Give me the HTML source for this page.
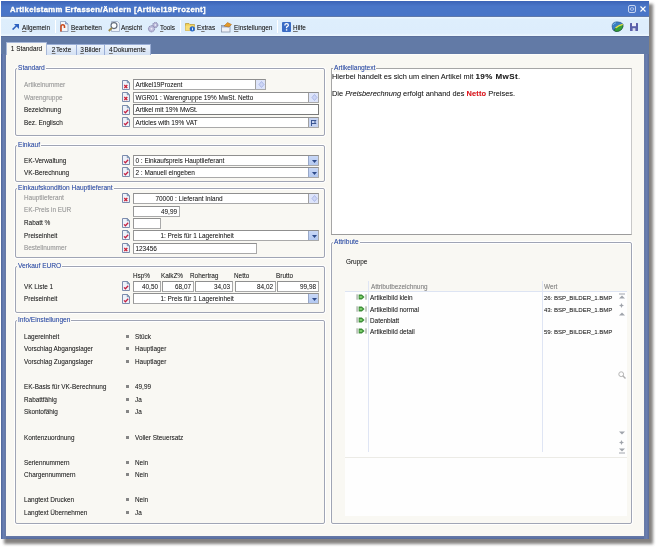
<!DOCTYPE html><html><head><meta charset="utf-8"><style>
*{margin:0;padding:0;box-sizing:border-box}
html,body{width:658px;height:548px;overflow:hidden;background:#fff;font-family:"Liberation Sans",sans-serif;font-size:6.4px;color:#262626;text-shadow:0.12px 0 0 rgba(40,40,40,.3)}
#root{position:absolute;left:0;top:0;width:658px;height:548px;filter:blur(0.4px)}
div,svg{position:absolute;white-space:nowrap}
span{position:static}
.grp{border:1px solid #a0a5b5;border-radius:2px;box-shadow:0 0 0 1px rgba(255,255,255,.9),inset 0 1px 0 #fff}
.lg{color:#3553a8;text-shadow:0.1px 0 0 rgba(53,83,168,.4);font-size:6.6px;background:#f9f8f3;padding:0 1px 0 1px;line-height:8px;height:8px}
.lbl{line-height:8px;height:8px}
.dis{color:#a0a0a0;text-shadow:0.12px 0 0 rgba(150,150,150,.5)}
.inp{height:11px;background:#fff;border:1px solid #a9a9a9;border-top-color:#8f8f8f;border-left-color:#979797;line-height:9px;padding-left:1.5px;overflow:hidden}
.r{text-align:right;padding-right:2px;padding-left:0}
.btn{top:0;right:0;width:10px;height:9px;background:#dde4fa;border-left:1px solid #a0a0a0}
.dd{background:linear-gradient(#c9d8f7,#b3c8f0);border-left:1px solid #98a8c8}
.ico{width:8px;height:10px}
.tab{height:11px;border:1px solid #9aaed6;border-bottom:none;border-radius:1px 1px 0 0;line-height:10px;background:linear-gradient(#eef4fc,#d3e0f3);color:#1a1a1a;text-align:center}
.tbt{line-height:8px;height:8px;top:24px;color:#1a1a1a}
.sep{top:20px;width:1px;height:13px;background:#b7c3d6;border-right:1px solid #fff}
u{text-decoration-color:#777}
</style></head><body><div id="root">
<div style="left:4px;top:4px;width:649px;height:540px;background:#6e6c6a;filter:blur(1.5px);opacity:.85"></div>
<div style="left:1px;top:1px;width:648px;height:538px;background:#5e75a8"></div>
<div style="left:1px;top:54px;width:5px;height:485px;background:linear-gradient(to right,#4d6496,#6a80b4 45%,#647aaa 75%,#6b7ba2)"></div>
<div style="left:644px;top:54px;width:5px;height:485px;background:linear-gradient(to left,#5a6c98,#6a7eb0 45%,#647aaa 75%,#6b7ba2)"></div>
<div style="left:6px;top:536px;width:638px;height:3px;background:linear-gradient(#6878a4,#5e74a6 50%,#566a9a)"></div>
<div style="left:1px;top:1px;width:648px;height:15px;background:linear-gradient(#3c63b6,#4a76c8 35%,#4a75c7)"></div>
<div style="left:10px;top:4px;color:#fff;font-weight:bold;font-size:7.7px;line-height:11px;height:11px;-webkit-text-stroke:0.35px #fff;letter-spacing:0.33px">Artikelstamm Erfassen/Ändern [Artikel19Prozent]</div>
<svg style="left:628px;top:5px" width="8" height="8" viewBox="0 0 8 8"><rect x=".5" y=".5" width="7" height="7" rx="1.5" fill="none" stroke="#c6d3f0" stroke-width="1"/><rect x="2.3" y="2.8" width="3.4" height="2.4" rx="1" fill="none" stroke="#c6d3f0" stroke-width=".9"/></svg>
<svg style="left:640px;top:6px" width="6" height="6" viewBox="0 0 6 6"><path d="M.5 .5L5.5 5.5M5.5 .5L.5 5.5" stroke="#fff" stroke-width="1.1"/></svg>
<div style="left:1px;top:16px;width:648px;height:21px;background:linear-gradient(#eef7ff,#deeefc 15%,#ddedfc 85%,#eef8ff);border-top:1px solid #6079aa;border-bottom:1px solid #5b6f9b"></div>
<div style="left:1px;top:37px;width:648px;height:17px;background:#627aa6"></div>
<div style="left:6px;top:54px;width:638px;height:482px;background:#f9f8f3;border-top:1px solid #fdfdfb"></div>
<div class="tab" style="left:46px;top:44px;width:31px"><u>2</u>&#8202;Texte</div>
<div class="tab" style="left:76px;top:44px;width:29px"><u>3</u>&#8202;Bilder</div>
<div class="tab" style="left:104px;top:44px;width:47px"><u>4</u>&#8202;Dokumente</div>
<div class="tab" style="left:6px;top:42px;width:41px;height:13px;background:#f9f8f3;border-color:#a8b8d8;line-height:12px">1 Standard</div>
<div class="grp" style="left:15px;top:68px;width:310px;height:68px"></div>
<div class="lg" style="left:17px;top:64px">Standard</div>
<div class="lbl dis" style="left:24px;top:81px;">Artikelnummer</div>
<svg class="ico" style="left:122px;top:80px" width="8" height="10" viewBox="0 0 8 10"><path d="M.5 .5H5.2L7.5 2.8V9.5H.5Z" fill="#eef2fa" stroke="#7d8cad"/><path d="M5.2 .5V2.8H7.5Z" fill="#9fb4d4" stroke="#5f7898" stroke-width=".6"/><path d="M2.3 5L5.3 8.1M5.3 5L2.3 8.1" stroke="#cc2035" stroke-width="1.35"/></svg>
<div class="inp " style="left:133px;top:79px;width:133px;">Artikel19Prozent<div class="btn"><svg style="left:1.5px;top:1px" width="7" height="7"><path d="M3.5 .5L6 3.5L3.5 6.5L1 3.5Z" fill="#cdd6f4" stroke="#a9b6e6" stroke-width=".9"/></svg></div></div>
<div class="lbl dis" style="left:24px;top:94px;">Warengruppe</div>
<svg class="ico" style="left:122px;top:92px" width="8" height="10" viewBox="0 0 8 10"><path d="M.5 .5H5.2L7.5 2.8V9.5H.5Z" fill="#eef2fa" stroke="#7d8cad"/><path d="M5.2 .5V2.8H7.5Z" fill="#9fb4d4" stroke="#5f7898" stroke-width=".6"/><path d="M2.3 5L5.3 8.1M5.3 5L2.3 8.1" stroke="#cc2035" stroke-width="1.35"/></svg>
<div class="inp " style="left:133px;top:92px;width:186px;">WGR01 : Warengruppe 19% MwSt. Netto<div class="btn"><svg style="left:1.5px;top:1px" width="7" height="7"><path d="M3.5 .5L6 3.5L3.5 6.5L1 3.5Z" fill="#cdd6f4" stroke="#a9b6e6" stroke-width=".9"/></svg></div></div>
<div class="lbl" style="left:24px;top:106px;">Bezeichnung</div>
<svg class="ico" style="left:122px;top:105px" width="8" height="10" viewBox="0 0 8 10"><path d="M.5 .5H5.2L7.5 2.8V9.5H.5Z" fill="#eef2fa" stroke="#7d8cad"/><path d="M5.2 .5V2.8H7.5Z" fill="#9fb4d4" stroke="#5f7898" stroke-width=".6"/><path d="M2 6.4L3.4 7.8L6.2 4.8" fill="none" stroke="#c42040" stroke-width="1.25"/></svg>
<div class="inp " style="left:133px;top:104px;width:186px;border-color:#7a7a7a;height:11px;line-height:10px">Artikel mit 19% MwSt.</div>
<div class="lbl" style="left:24px;top:119px;">Bez. Englisch</div>
<svg class="ico" style="left:122px;top:117px" width="8" height="10" viewBox="0 0 8 10"><path d="M.5 .5H5.2L7.5 2.8V9.5H.5Z" fill="#eef2fa" stroke="#7d8cad"/><path d="M5.2 .5V2.8H7.5Z" fill="#9fb4d4" stroke="#5f7898" stroke-width=".6"/><path d="M2 6.4L3.4 7.8L6.2 4.8" fill="none" stroke="#c42040" stroke-width="1.25"/></svg>
<div class="inp " style="left:133px;top:117px;width:186px;">Articles with 19% VAT<div class="btn" style="background:#c7d4f2"><svg style="left:2px;top:1.5px" width="6" height="6"><path d="M.5 0V6M.5 .5H5L3.5 2L5 3.5H.5" fill="none" stroke="#2d4a8a" stroke-width=".9"/></svg></div></div>
<div class="grp" style="left:15px;top:145px;width:310px;height:37px"></div>
<div class="lg" style="left:17px;top:141px">Einkauf</div>
<div class="lbl" style="left:24px;top:157px;">EK-Verwaltung</div>
<svg class="ico" style="left:122px;top:155px" width="8" height="10" viewBox="0 0 8 10"><path d="M.5 .5H5.2L7.5 2.8V9.5H.5Z" fill="#eef2fa" stroke="#7d8cad"/><path d="M5.2 .5V2.8H7.5Z" fill="#9fb4d4" stroke="#5f7898" stroke-width=".6"/><path d="M2 6.4L3.4 7.8L6.2 4.8" fill="none" stroke="#c42040" stroke-width="1.25"/></svg>
<div class="inp " style="left:133px;top:155px;width:186px;">0 : Einkaufspreis Hauptlieferant<div class="btn dd"><svg style="left:2.5px;top:3.5px" width="5" height="3"><path d="M0 0H5L2.5 3Z" fill="#2d4a8a"/></svg></div></div>
<div class="lbl" style="left:24px;top:169px;">VK-Berechnung</div>
<svg class="ico" style="left:122px;top:167px" width="8" height="10" viewBox="0 0 8 10"><path d="M.5 .5H5.2L7.5 2.8V9.5H.5Z" fill="#eef2fa" stroke="#7d8cad"/><path d="M5.2 .5V2.8H7.5Z" fill="#9fb4d4" stroke="#5f7898" stroke-width=".6"/><path d="M2 6.4L3.4 7.8L6.2 4.8" fill="none" stroke="#c42040" stroke-width="1.25"/></svg>
<div class="inp " style="left:133px;top:167px;width:186px;">2 : Manuell eingeben<div class="btn dd"><svg style="left:2.5px;top:3.5px" width="5" height="3"><path d="M0 0H5L2.5 3Z" fill="#2d4a8a"/></svg></div></div>
<div class="grp" style="left:15px;top:188px;width:310px;height:70px"></div>
<div class="lg" style="left:17px;top:184px">Einkaufskondition Hauptlieferant</div>
<div class="lbl dis" style="left:24px;top:194px;">Hauptlieferant</div>
<svg class="ico" style="left:122px;top:193px" width="8" height="10" viewBox="0 0 8 10"><path d="M.5 .5H5.2L7.5 2.8V9.5H.5Z" fill="#eef2fa" stroke="#7d8cad"/><path d="M5.2 .5V2.8H7.5Z" fill="#9fb4d4" stroke="#5f7898" stroke-width=".6"/><path d="M2.3 5L5.3 8.1M5.3 5L2.3 8.1" stroke="#cc2035" stroke-width="1.35"/></svg>
<div class="inp " style="left:133px;top:193px;width:186px;"><span style="padding-left:20px">70000 : Lieferant Inland</span><div class="btn"><svg style="left:1.5px;top:1px" width="7" height="7"><path d="M3.5 .5L6 3.5L3.5 6.5L1 3.5Z" fill="#cdd6f4" stroke="#a9b6e6" stroke-width=".9"/></svg></div></div>
<div class="lbl dis" style="left:24px;top:206px;">EK-Preis in EUR</div>
<div class="inp r" style="left:133px;top:206px;width:47px;">49,99</div>
<div class="lbl" style="left:24px;top:219px;">Rabatt %</div>
<svg class="ico" style="left:122px;top:218px" width="8" height="10" viewBox="0 0 8 10"><path d="M.5 .5H5.2L7.5 2.8V9.5H.5Z" fill="#eef2fa" stroke="#7d8cad"/><path d="M5.2 .5V2.8H7.5Z" fill="#9fb4d4" stroke="#5f7898" stroke-width=".6"/><path d="M2 6.4L3.4 7.8L6.2 4.8" fill="none" stroke="#c42040" stroke-width="1.25"/></svg>
<div class="inp " style="left:133px;top:218px;width:28px;"></div>
<div class="lbl" style="left:24px;top:232px;">Preiseinheit</div>
<svg class="ico" style="left:122px;top:230px" width="8" height="10" viewBox="0 0 8 10"><path d="M.5 .5H5.2L7.5 2.8V9.5H.5Z" fill="#eef2fa" stroke="#7d8cad"/><path d="M5.2 .5V2.8H7.5Z" fill="#9fb4d4" stroke="#5f7898" stroke-width=".6"/><path d="M2 6.4L3.4 7.8L6.2 4.8" fill="none" stroke="#c42040" stroke-width="1.25"/></svg>
<div class="inp " style="left:133px;top:230px;width:186px;"><span style="padding-left:25px">1: Preis für 1 Lagereinheit</span><div class="btn dd"><svg style="left:2.5px;top:3.5px" width="5" height="3"><path d="M0 0H5L2.5 3Z" fill="#2d4a8a"/></svg></div></div>
<div class="lbl dis" style="left:24px;top:244px;">Bestellnummer</div>
<svg class="ico" style="left:122px;top:243px" width="8" height="10" viewBox="0 0 8 10"><path d="M.5 .5H5.2L7.5 2.8V9.5H.5Z" fill="#eef2fa" stroke="#7d8cad"/><path d="M5.2 .5V2.8H7.5Z" fill="#9fb4d4" stroke="#5f7898" stroke-width=".6"/><path d="M2.3 5L5.3 8.1M5.3 5L2.3 8.1" stroke="#cc2035" stroke-width="1.35"/></svg>
<div class="inp " style="left:133px;top:243px;width:124px;">123456</div>
<div class="grp" style="left:15px;top:266px;width:310px;height:47px"></div>
<div class="lg" style="left:17px;top:262px">Verkauf EURO</div>
<div class="lbl" style="left:133px;top:272px;">Hsp%</div>
<div class="lbl" style="left:161px;top:272px;">KalkZ%</div>
<div class="lbl" style="left:190px;top:272px;">Rohertrag</div>
<div class="lbl" style="left:234px;top:272px;">Netto</div>
<div class="lbl" style="left:276px;top:272px;">Brutto</div>
<div class="lbl" style="left:24px;top:283px;">VK Liste 1</div>
<svg class="ico" style="left:122px;top:281px" width="8" height="10" viewBox="0 0 8 10"><path d="M.5 .5H5.2L7.5 2.8V9.5H.5Z" fill="#eef2fa" stroke="#7d8cad"/><path d="M5.2 .5V2.8H7.5Z" fill="#9fb4d4" stroke="#5f7898" stroke-width=".6"/><path d="M2 6.4L3.4 7.8L6.2 4.8" fill="none" stroke="#c42040" stroke-width="1.25"/></svg>
<div class="inp r" style="left:133px;top:281px;width:28px;">40,50</div>
<div class="inp r" style="left:162px;top:281px;width:32px;">68,07</div>
<div class="inp r" style="left:195px;top:281px;width:38px;">34,03</div>
<div class="inp r" style="left:235px;top:281px;width:41px;">84,02</div>
<div class="inp r" style="left:277px;top:281px;width:42px;">99,98</div>
<div class="lbl" style="left:24px;top:295px;">Preiseinheit</div>
<svg class="ico" style="left:122px;top:294px" width="8" height="10" viewBox="0 0 8 10"><path d="M.5 .5H5.2L7.5 2.8V9.5H.5Z" fill="#eef2fa" stroke="#7d8cad"/><path d="M5.2 .5V2.8H7.5Z" fill="#9fb4d4" stroke="#5f7898" stroke-width=".6"/><path d="M2 6.4L3.4 7.8L6.2 4.8" fill="none" stroke="#c42040" stroke-width="1.25"/></svg>
<div class="inp " style="left:133px;top:293px;width:186px;"><span style="padding-left:25px">1: Preis für 1 Lagereinheit</span><div class="btn dd"><svg style="left:2.5px;top:3.5px" width="5" height="3"><path d="M0 0H5L2.5 3Z" fill="#2d4a8a"/></svg></div></div>
<div class="grp" style="left:15px;top:320px;width:310px;height:204px"></div>
<div class="lg" style="left:17px;top:316px">Info/Einstellungen</div>
<div class="lbl" style="left:24px;top:333px;">Lagereinheit</div>
<div style="left:126px;top:335px;width:3px;height:3px;background:#858585"></div>
<div class="lbl" style="left:135px;top:333px;">Stück</div>
<div class="lbl" style="left:24px;top:345px;">Vorschlag Abgangslager</div>
<div style="left:126px;top:347px;width:3px;height:3px;background:#858585"></div>
<div class="lbl" style="left:135px;top:345px;">Hauptlager</div>
<div class="lbl" style="left:24px;top:358px;">Vorschlag Zugangslager</div>
<div style="left:126px;top:360px;width:3px;height:3px;background:#858585"></div>
<div class="lbl" style="left:135px;top:358px;">Hauptlager</div>
<div class="lbl" style="left:24px;top:383px;">EK-Basis für VK-Berechnung</div>
<div style="left:126px;top:385px;width:3px;height:3px;background:#858585"></div>
<div class="lbl" style="left:135px;top:383px;">49,99</div>
<div class="lbl" style="left:24px;top:396px;">Rabattfähig</div>
<div style="left:126px;top:398px;width:3px;height:3px;background:#858585"></div>
<div class="lbl" style="left:135px;top:396px;">Ja</div>
<div class="lbl" style="left:24px;top:408px;">Skontofähig</div>
<div style="left:126px;top:410px;width:3px;height:3px;background:#858585"></div>
<div class="lbl" style="left:135px;top:408px;">Ja</div>
<div class="lbl" style="left:24px;top:434px;">Kontenzuordnung</div>
<div style="left:126px;top:436px;width:3px;height:3px;background:#858585"></div>
<div class="lbl" style="left:135px;top:434px;">Voller Steuersatz</div>
<div class="lbl" style="left:24px;top:459px;">Seriennummern</div>
<div style="left:126px;top:461px;width:3px;height:3px;background:#858585"></div>
<div class="lbl" style="left:135px;top:459px;">Nein</div>
<div class="lbl" style="left:24px;top:471px;">Chargennummern</div>
<div style="left:126px;top:473px;width:3px;height:3px;background:#858585"></div>
<div class="lbl" style="left:135px;top:471px;">Nein</div>
<div class="lbl" style="left:24px;top:496px;">Langtext Drucken</div>
<div style="left:126px;top:498px;width:3px;height:3px;background:#858585"></div>
<div class="lbl" style="left:135px;top:496px;">Nein</div>
<div class="lbl" style="left:24px;top:509px;">Langtext Übernehmen</div>
<div style="left:126px;top:511px;width:3px;height:3px;background:#858585"></div>
<div class="lbl" style="left:135px;top:509px;">Ja</div>
<div style="left:331px;top:68px;width:301px;height:167px;background:#fff;border:1px solid #a6a6a6;border-right-color:#c8c8c8;border-bottom-color:#9c9c9c"></div>
<div class="lg" style="left:333px;top:64px">Artikellangtext</div>
<div style="left:332px;top:72px;font-size:7.4px;line-height:10px;color:#222">Hierbei handelt es sich um einen Artikel mit <b style="font-size:8px;letter-spacing:0.45px">19% MwSt</b>.</div>
<div style="left:332px;top:89px;font-size:7.4px;line-height:10px;color:#222">Die <i>Preisberechnung</i> erfolgt anhand des <b style="color:#e8141c;letter-spacing:0.2px">Netto</b> Preises.</div>
<div class="grp" style="left:331px;top:242px;width:301px;height:282px"></div>
<div class="lg" style="left:333px;top:238px">Attribute</div>
<div class="lbl" style="left:346px;top:258px;">Gruppe</div>
<div style="left:345px;top:291px;width:282px;height:166px;background:#fefefe;border-top:1px solid #dde4f3"></div>
<div style="left:368px;top:281px;width:1px;height:171px;background:#dfe5f4"></div>
<div style="left:542px;top:281px;width:1px;height:171px;background:#dfe5f4"></div>
<div class="lbl" style="left:371px;top:283px;color:#8c8c8c">Attributbezeichnung</div>
<div class="lbl" style="left:544px;top:283px;color:#8c8c8c">Wert</div>
<svg style="left:356px;top:294px" width="11" height="6" viewBox="0 0 11 6"><rect x=".3" y=".3" width="1.6" height="5.4" fill="#b5bdb5"/><rect x="9.2" y=".3" width="1.6" height="5.4" fill="#b5bdb5"/><path d="M2.6 .6H5.8L8.6 3L5.8 5.4H2.6Z" fill="#3f8f3a"/><path d="M3.6 2H5.6L6.6 3L5.6 4H3.6Z" fill="#7ccf6a"/></svg>
<div class="lbl" style="left:370px;top:294px;">Artikelbild klein</div>
<div class="lbl" style="left:544px;top:294px;font-size:6px">26: BSP_BILDER_1.BMP</div>
<svg style="left:356px;top:306px" width="11" height="6" viewBox="0 0 11 6"><rect x=".3" y=".3" width="1.6" height="5.4" fill="#b5bdb5"/><rect x="9.2" y=".3" width="1.6" height="5.4" fill="#b5bdb5"/><path d="M2.6 .6H5.8L8.6 3L5.8 5.4H2.6Z" fill="#3f8f3a"/><path d="M3.6 2H5.6L6.6 3L5.6 4H3.6Z" fill="#7ccf6a"/></svg>
<div class="lbl" style="left:370px;top:306px;">Artikelbild normal</div>
<div class="lbl" style="left:544px;top:306px;font-size:6px">43: BSP_BILDER_1.BMP</div>
<svg style="left:356px;top:317px" width="11" height="6" viewBox="0 0 11 6"><rect x=".3" y=".3" width="1.6" height="5.4" fill="#b5bdb5"/><rect x="9.2" y=".3" width="1.6" height="5.4" fill="#b5bdb5"/><path d="M2.6 .6H5.8L8.6 3L5.8 5.4H2.6Z" fill="#3f8f3a"/><path d="M3.6 2H5.6L6.6 3L5.6 4H3.6Z" fill="#7ccf6a"/></svg>
<div class="lbl" style="left:370px;top:317px;">Datenblatt</div>
<svg style="left:356px;top:328px" width="11" height="6" viewBox="0 0 11 6"><rect x=".3" y=".3" width="1.6" height="5.4" fill="#b5bdb5"/><rect x="9.2" y=".3" width="1.6" height="5.4" fill="#b5bdb5"/><path d="M2.6 .6H5.8L8.6 3L5.8 5.4H2.6Z" fill="#3f8f3a"/><path d="M3.6 2H5.6L6.6 3L5.6 4H3.6Z" fill="#7ccf6a"/></svg>
<div class="lbl" style="left:370px;top:328px;">Artikelbild detail</div>
<div class="lbl" style="left:544px;top:328px;font-size:6px">59: BSP_BILDER_1.BMP</div>
<div style="left:345px;top:457px;width:282px;height:1px;background:#ecebe6"></div>
<div style="left:345px;top:458px;width:282px;height:58px;background:#fefefe"></div>
<svg style="left:619px;top:293px" width="6" height="6" viewBox="0 0 6 6"><rect x="0" y="0.5" width="6" height="1" fill="#a0a4ab"/><path d="M0 5.5L3 2.5L6 5.5Z" fill="#a0a4ab"/></svg>
<svg style="left:619px;top:303px" width="5" height="5" viewBox="0 0 5 5"><path d="M2.5 0L3.3 1.7L5 2.5L3.3 3.3L2.5 5L1.7 3.3L0 2.5L1.7 1.7Z" fill="#a0a4ab"/></svg>
<svg style="left:619px;top:312px" width="6" height="4" viewBox="0 0 6 4"><path d="M0 3.5L3 .5L6 3.5Z" fill="#a0a4ab"/></svg>
<svg style="left:618px;top:371px" width="8" height="8" viewBox="0 0 8 8"><circle cx="3.2" cy="3.2" r="2.4" fill="none" stroke="#b5b5b5" stroke-width="1"/><path d="M4.8 4.8L7.5 7.5" stroke="#b0b0b0" stroke-width="1.4"/></svg>
<svg style="left:619px;top:431px" width="6" height="4" viewBox="0 0 6 4"><path d="M0 .5L3 3.5L6 .5Z" fill="#a0a4ab"/></svg>
<svg style="left:619px;top:440px" width="5" height="5" viewBox="0 0 5 5"><path d="M2.5 0L3.3 1.7L5 2.5L3.3 3.3L2.5 5L1.7 3.3L0 2.5L1.7 1.7Z" fill="#a0a4ab"/></svg>
<svg style="left:619px;top:448px" width="6" height="6" viewBox="0 0 6 6"><path d="M0 .5L3 3.5L6 .5Z" fill="#a0a4ab"/><rect x="0" y="4.5" width="6" height="1" fill="#a0a4ab"/></svg>
<div class="tbt" style="left:22px"><u>A</u>llgemein</div>
<div class="tbt" style="left:71px"><u>B</u>earbeiten</div>
<div class="tbt" style="left:121px">A<u>n</u>sicht</div>
<div class="tbt" style="left:160px"><u>T</u>ools</div>
<div class="tbt" style="left:197px">E<u>x</u>tras</div>
<div class="tbt" style="left:234px"><u>E</u>instellungen</div>
<div class="tbt" style="left:293px"><u>H</u>ilfe</div>
<div class="sep" style="left:55px"></div>
<div class="sep" style="left:180px"></div>
<div class="sep" style="left:277px"></div>
<svg style="left:12px;top:24px" width="7" height="6" viewBox="0 0 7 6"><path d="M.6 5.6L4.5 1.7" stroke="#2f62c0" stroke-width="1.6"/><path d="M2 0H7V5Z" fill="#2f62c0"/></svg>
<svg style="left:59px;top:21px" width="10" height="11" viewBox="0 0 10 11"><path d="M1.5 .5H6.5L9 3V10.5H1.5Z" fill="#f4f6fa" stroke="#8a9ab8" stroke-width=".8"/><path d="M6.5 .5V3H9" fill="#9fb8e0" stroke="#6f88b8" stroke-width=".7"/><path d="M2 10.5V5.5Q2 3.8 3.8 3.8Q5.5 3.8 5.5 5.5V7" fill="none" stroke="#c84a1e" stroke-width="1.6"/></svg>
<svg style="left:107px;top:20px" width="13" height="13" viewBox="0 0 13 13"><path d="M4.5 1.5H10.5L12.5 3.5V11.5H4.5Z" fill="#eef3fa" stroke="#9aaac4" stroke-width=".8"/><circle cx="7" cy="5.6" r="3" fill="#fbfdff" stroke="#626b7c" stroke-width="1.1"/><path d="M4.8 7.8L1.8 11" stroke="#a08c4a" stroke-width="1.9"/></svg>
<svg style="left:147px;top:21px" width="12" height="12" viewBox="0 0 12 12"><circle cx="8.3" cy="4" r="2.6" fill="#b4b2d4" stroke="#7c7aa4" stroke-width=".9" stroke-dasharray="1.2 .6"/><circle cx="8.3" cy="4" r=".9" fill="#e8e8f4"/><circle cx="4.5" cy="7.8" r="3.1" fill="#bdbcdc" stroke="#7c7aa4" stroke-width=".9" stroke-dasharray="1.3 .6"/><circle cx="4.5" cy="7.8" r="1" fill="#ececf6"/></svg>
<svg style="left:185px;top:21px" width="11" height="11" viewBox="0 0 11 11"><path d="M.5 2.5H4L5 3.5H9.5V9.5H.5Z" fill="#f0cf55" stroke="#b89632" stroke-width=".7"/><path d="M.5 4.5H9.5V9.5H.5Z" fill="#f7dd78"/><circle cx="7.3" cy="7.8" r="2.6" fill="#2566c8"/><rect x="7" y="6.6" width=".8" height="2.6" fill="#fff"/></svg>
<svg style="left:221px;top:21px" width="12" height="12" viewBox="0 0 12 12"><rect x=".5" y="4.5" width="8.5" height="6.5" fill="#eef1f7" stroke="#8893a8" stroke-width=".8"/><rect x="1" y="5" width="7.5" height="1.5" fill="#9fb2d4"/><path d="M3 5L6.5 1.5L10.5 3.5L8 6Z" fill="#e39a2a" stroke="#a8661a" stroke-width=".5"/></svg>
<svg style="left:282px;top:22px" width="9" height="10" viewBox="0 0 9 10"><rect x="0" y="0" width="9" height="10" rx="1" fill="#3a6bc4"/><path d="M2.8 3.4Q2.8 1.6 4.6 1.6Q6.4 1.6 6.4 3.2Q6.4 4.3 4.6 5V6.2" fill="none" stroke="#fff" stroke-width="1.3"/><rect x="3.9" y="7.2" width="1.4" height="1.4" fill="#fff"/></svg>
<svg style="left:611px;top:21px" width="13" height="11" viewBox="0 0 13 11"><path d="M1 5.5Q1 1 6 .8Q11 .8 12 3.5Q12.5 6 10.5 8.5Q8 10.8 5 10.5Q1 10 1 5.5Z" fill="#3b7fc4" stroke="#2a4f80" stroke-width=".5"/><path d="M3 9.5Q5 5 11.8 3.2Q12.6 6 10.5 8.5Q8 10.8 5 10.5Z" fill="#34a03a" stroke="#1f5a22" stroke-width=".6"/><path d="M4.5 7Q8 4 11.8 3.3" stroke="#e8e24a" stroke-width="1.3" fill="none"/><path d="M2 4Q3 2 5 1.8" stroke="#8cc8ee" stroke-width=".8" fill="none"/></svg>
<svg style="left:630px;top:23px" width="8" height="8" viewBox="0 0 8 8"><rect x="0" y="0" width="8" height="8" rx=".5" fill="#5a60aa"/><rect x="2" y="0" width="4" height="3.2" fill="#eceef8"/><rect x="2.6" y="5.2" width="2.8" height="2.8" fill="#d8dcee"/></svg>
</div></body></html>
